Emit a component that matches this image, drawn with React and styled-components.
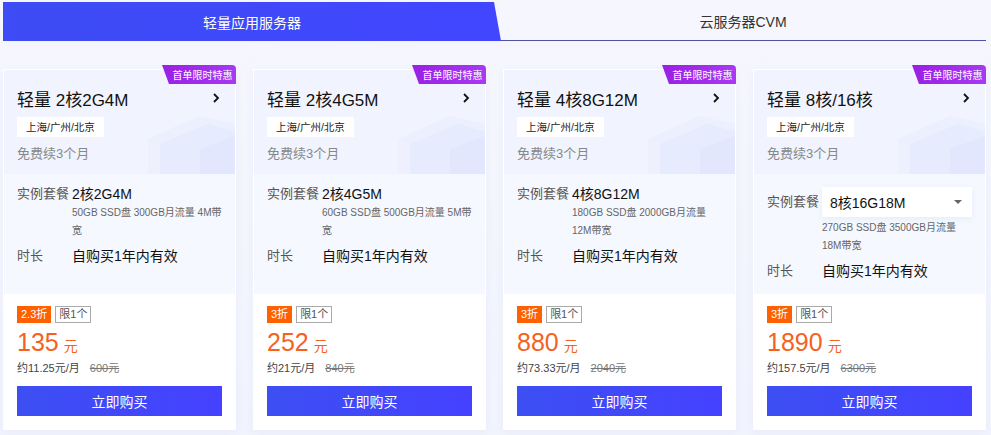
import React from 'react'
import styled, { createGlobalStyle } from 'styled-components'

const GlobalStyle = createGlobalStyle`
  body {
    margin: 0;
    background: #f3f5fd;
    font-family: 'Liberation Sans', 'Noto Sans CJK SC', sans-serif;
    color: #222;
  }
`

const Page = styled.div`
  width: 991px;
  height: 435px;
  padding: 2px 5px 0 3px;
  box-sizing: border-box;
  overflow: hidden;
  background: linear-gradient(180deg, #f6f7fd 0%, #f1f4fd 100%);
`

const Tabs = styled.div`
  display: flex;
  height: 39px;
`

const Tab = styled.div`
  display: flex;
  align-items: center;
  justify-content: center;
  font-size: 14px;
  box-sizing: border-box;
  ${p =>
    p.active
      ? `
    width: 498px;
    color: #fff;
    background: linear-gradient(90deg, #3d4cf4, #4146ff);
    clip-path: polygon(0 0, calc(100% - 7px) 0, 100% 100%, 0 100%);
  `
      : `
    flex: 1;
    color: #333;
    border-bottom: 1px solid #4d54a6;
    margin-left: -1px;
  `}
`

const Cards = styled.div`
  display: grid;
  grid-template-columns: repeat(4, 233px);
  column-gap: 17px;
  margin-top: 28px;
`

const Card = styled.div`
  position: relative;
  height: 361px;
  display: flex;
  flex-direction: column;
  background: #fff;
  border: 1px solid #fff;
  box-sizing: border-box;
  box-shadow: 0 2px 8px rgba(90, 110, 200, 0.06);
`

const Badge = styled.div`
  position: absolute;
  top: -5px;
  right: -1px;
  width: 74px;
  height: 19px;
  display: flex;
  align-items: center;
  justify-content: center;
  padding-left: 7px;
  box-sizing: border-box;
  font-size: 10px;
  color: #fff;
  background: linear-gradient(90deg, #9a1fe4, #a73af2);
  border-top-right-radius: 4px;
  clip-path: polygon(0 0, 100% 0, 100% 100%, 7px 100%);
`

const Head = styled.div`
  position: relative;
  height: 104px;
  padding: 16px 14px 0 13px;
  box-sizing: border-box;
  background: #f1f4fe;
  overflow: hidden;
`

const Deco = styled.svg`
  position: absolute;
  right: 0;
  bottom: 0;
`

const TitleRow = styled.div`
  position: relative;
  display: flex;
  align-items: center;
  justify-content: space-between;
  height: 24px;
`

const Title = styled.div`
  font-size: 17px;
  color: #111;
  white-space: nowrap;
`

const Region = styled.div`
  position: relative;
  display: inline-block;
  margin-top: 7px;
  height: 20px;
  line-height: 20px;
  padding: 0 9px;
  font-size: 10.5px;
  color: #222;
  background: #fff;
`

const Renew = styled.div`
  position: relative;
  margin-top: 6px;
  font-size: 13px;
  color: #888;
`

const Spec = styled.div`
  height: 120px;
  padding: 10px 10px 0 13px;
  box-sizing: border-box;
  background: #f5f8ff;
`

const Row = styled.div`
  display: grid;
  grid-template-columns: 55px 1fr;
  align-items: ${p => (p.center ? 'center' : 'start')};
  margin-bottom: ${p => p.gap || 0}px;
`

const Label = styled.div`
  font-size: 13px;
  line-height: 20px;
  color: #555;
`

const Value = styled.div`
  font-size: 14px;
  line-height: 20px;
  color: #111;
`

const Desc = styled.div`
  font-size: 10px;
  line-height: 18px;
  color: #666;
  grid-column: 2;
`

const Select = styled.div`
  display: flex;
  align-items: center;
  justify-content: space-between;
  height: 30px;
  width: 150px;
  padding: 0 10px 0 8px;
  box-sizing: border-box;
  background: #fff;
  font-size: 14px;
  color: #111;
  box-shadow: 0 2px 6px rgba(80, 100, 180, 0.08);
`

const Caret = styled.span`
  width: 0;
  height: 0;
  border-left: 4px solid transparent;
  border-right: 4px solid transparent;
  border-top: 4px solid #666;
`

const Foot = styled.div`
  flex: 1;
  padding: 12px 14px 0 13px;
  box-sizing: border-box;
  background: #fff;
`

const Tags = styled.div`
  display: flex;
  gap: 4px;
`

const Tag = styled.span`
  height: 17px;
  line-height: 15px;
  padding: 0 3px;
  font-size: 11px;
  box-sizing: border-box;
  border: 1px solid ${p => (p.hot ? '#ff6000' : '#aaa')};
  background: ${p => (p.hot ? '#ff6000' : '#fff')};
  color: ${p => (p.hot ? '#fff' : '#555')};
`

const Price = styled.div`
  margin-top: 5px;
  height: 32px;
  display: flex;
  align-items: baseline;
  color: #f5621f;
  font-size: 25px;
`

const Unit = styled.span`
  font-size: 14px;
  margin-left: 5px;
`

const Sub = styled.div`
  font-size: 11px;
  color: #444;
  line-height: 16px;
  s {
    margin-left: 10px;
    color: #777;
  }
`

const Buy = styled.button`
  display: block;
  width: 205px;
  height: 30px;
  margin-top: 10px;
  border: 0;
  color: #fff;
  font-size: 14px;
  font-family: inherit;
  background: linear-gradient(90deg, #3d4ff3, #4541ff);
`

const Chevron = () => (
  <svg width="10" height="12" viewBox="0 0 10 12">
    <path d="M3 2l4 4-4 4" fill="none" stroke="#111" strokeWidth="1.8" />
  </svg>
)

const Decoration = () => (
  <Deco width="95" height="70" viewBox="0 0 95 70">
    <path d="M8 35 L60 12 L95 20 L95 70 L8 70 Z" fill="#e8edfd" opacity="0.7" />
    <path d="M20 40 L68 20 L95 28 L95 70 L20 70 Z" fill="#e2e8fc" opacity="0.6" />
    <path d="M8 35 L20 40 L20 70 L8 70 Z" fill="#eef1fd" />
    <path d="M60 45 L95 32 L95 70 L60 70 Z" fill="#dfe5fc" opacity="0.7" />
  </Deco>
)

const plans = [
  {
    title: '轻量 2核2G4M',
    spec: '2核2G4M',
    desc: '50GB SSD盘 300GB月流量 4M带宽',
    off: '2.3折',
    price: '135',
    month: '约11.25元/月',
    old: '600元',
  },
  {
    title: '轻量 2核4G5M',
    spec: '2核4G5M',
    desc: '60GB SSD盘 500GB月流量 5M带宽',
    off: '3折',
    price: '252',
    month: '约21元/月',
    old: '840元',
  },
  {
    title: '轻量 4核8G12M',
    spec: '4核8G12M',
    desc: '180GB SSD盘 2000GB月流量 12M带宽',
    off: '3折',
    price: '880',
    month: '约73.33元/月',
    old: '2040元',
  },
  {
    title: '轻量 8核/16核',
    spec: '8核16G18M',
    desc: '270GB SSD盘 3500GB月流量 18M带宽',
    off: '3折',
    price: '1890',
    month: '约157.5元/月',
    old: '6300元',
    select: true,
  },
]

const PlanCard = ({ plan }) => (
  <Card>
    <Head>
      <Decoration />
      <TitleRow>
        <Title>{plan.title}</Title>
        <Chevron />
      </TitleRow>
      <Region>上海/广州/北京</Region>
      <Renew>免费续3个月</Renew>
    </Head>
    <Badge>首单限时特惠</Badge>
    <Spec>
      {plan.select ? (
        <Row center gap={2} style={{ marginTop: 3 }}>
          <Label>实例套餐</Label>
          <Select>
            {plan.spec}
            <Caret />
          </Select>
        </Row>
      ) : (
        <Row>
          <Label>实例套餐</Label>
          <Value>{plan.spec}</Value>
        </Row>
      )}
      <Row gap={6}>
        <Desc>{plan.desc}</Desc>
      </Row>
      <Row>
        <Label>时长</Label>
        <Value>自购买1年内有效</Value>
      </Row>
    </Spec>
    <Foot>
      <Tags>
        <Tag hot>{plan.off}</Tag>
        <Tag>限1个</Tag>
      </Tags>
      <Price>
        {plan.price}
        <Unit>元</Unit>
      </Price>
      <Sub>
        {plan.month}
        <s>{plan.old}</s>
      </Sub>
      <Buy>立即购买</Buy>
    </Foot>
  </Card>
)

export default function App() {
  return (
    <>
      <GlobalStyle />
      <Page>
        <Tabs>
          <Tab active>轻量应用服务器</Tab>
          <Tab>云服务器CVM</Tab>
        </Tabs>
        <Cards>
          {plans.map(p => (
            <PlanCard key={p.title} plan={p} />
          ))}
        </Cards>
      </Page>
    </>
  )
}
